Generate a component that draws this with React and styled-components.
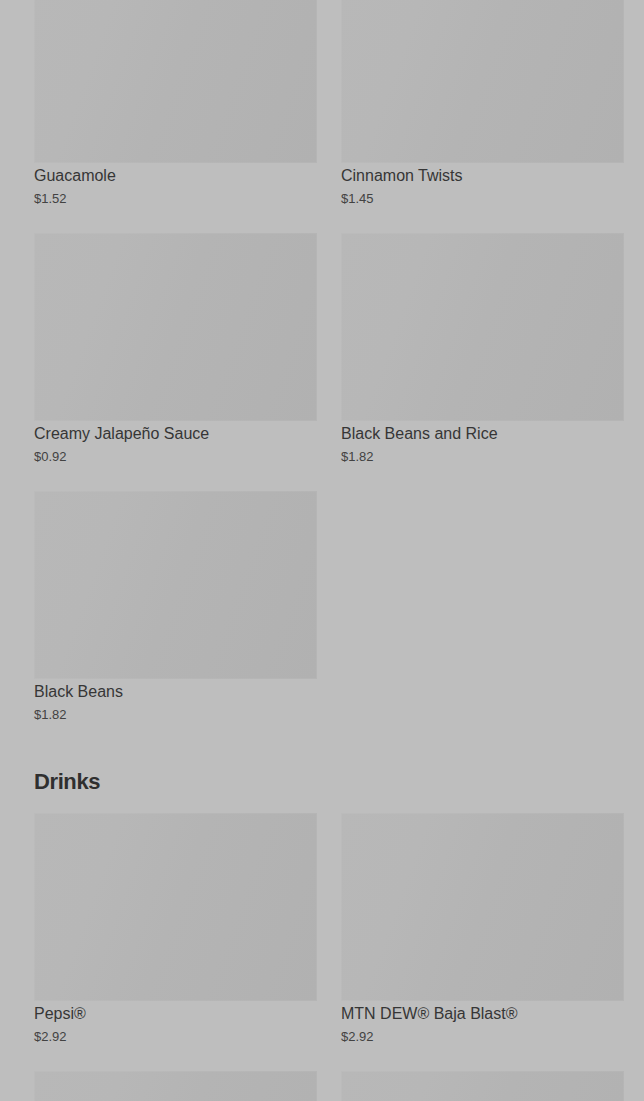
import React from 'react';
import styled, { createGlobalStyle } from 'styled-components';

const GlobalStyle = createGlobalStyle`
  html, body {
    margin: 0;
    padding: 0;
    background: #bebebe;
  }
  body {
    font-family: "Liberation Sans", Arial, sans-serif;
  }
`;

const Page = styled.div`
  padding: 0 20px 40px 34px;
  margin-top: -25px;
`;

const Section = styled.section`
  margin-bottom: 42px;
`;

const Heading = styled.h2`
  margin: 0 0 15px;
  font-size: 22px;
  line-height: 32px;
  font-weight: 700;
  color: #2f2f2f;
  letter-spacing: -0.4px;
`;

const Grid = styled.div`
  display: grid;
  grid-template-columns: 1fr 1fr;
  column-gap: 24px;
  row-gap: 25px;
`;

const Card = styled.div`
  display: flex;
  flex-direction: column;
`;

const Thumb = styled.div`
  height: 188px;
  box-shadow: inset 0 0 0 1px rgba(255, 255, 255, 0.05);
  background: linear-gradient(
    110deg,
    #b8b8b8 0%,
    #b7b7b7 25%,
    #b4b4b4 50%,
    #b1b1b1 100%
  );
`;

const Name = styled.div`
  margin-top: 3px;
  font-size: 16px;
  line-height: 20px;
  color: #363636;
`;

const Price = styled.div`
  margin-top: 4px;
  font-size: 13px;
  line-height: 18px;
  color: #424242;
`;

const sides = [
  { name: 'Guacamole', price: '$1.52' },
  { name: 'Cinnamon Twists', price: '$1.45' },
  { name: 'Creamy Jalapeño Sauce', price: '$0.92' },
  { name: 'Black Beans and Rice', price: '$1.82' },
  { name: 'Black Beans', price: '$1.82' },
];

const drinks = [
  { name: 'Pepsi®', price: '$2.92' },
  { name: 'MTN DEW® Baja Blast®', price: '$2.92' },
  { name: 'Diet Pepsi®', price: '$2.92' },
  { name: 'Brisk® Mango Tea', price: '$2.92' },
];

const Item = ({ name, price }) => (
  <Card>
    <Thumb />
    <Name>{name}</Name>
    <Price>{price}</Price>
  </Card>
);

const App = () => {
  return (
    <>
      <GlobalStyle />
      <Page>
        <Section>
          <Grid>
            {sides.map((s) => (
              <Item key={s.name} {...s} />
            ))}
          </Grid>
        </Section>
        <Section>
          <Heading>Drinks</Heading>
          <Grid>
            {drinks.map((d) => (
              <Item key={d.name} {...d} />
            ))}
          </Grid>
        </Section>
      </Page>
    </>
  );
};

export default App;
